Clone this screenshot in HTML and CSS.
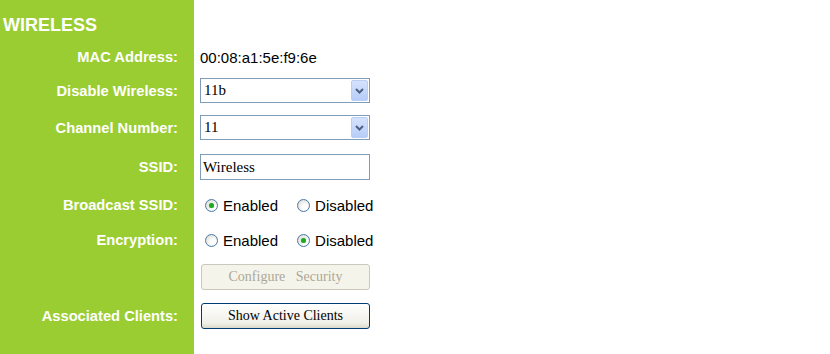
FILE: index.html
```html
<!DOCTYPE html>
<html>
<head>
<meta charset="utf-8">
<link rel="stylesheet" href="styles.css">
</head>
<body>
<div class="page">
  <div class="side title">WIRELESS</div><div class="main"></div>

  <div class="side label">MAC Address:</div>
  <div class="main"><span class="value">00:08:a1:5e:f9:6e</span></div>

  <div class="side label">Disable Wireless:</div>
  <div class="main">
    <div class="select"><span class="sel-text">11b</span>
      <span class="sel-btn"><svg width="9" height="6" viewBox="0 0 9 6"><path d="M1 1 L4.5 4.5 L8 1" fill="none" stroke="#4d6185" stroke-width="2"/></svg></span>
    </div>
  </div>

  <div class="side label">Channel Number:</div>
  <div class="main">
    <div class="select"><span class="sel-text">11</span>
      <span class="sel-btn"><svg width="9" height="6" viewBox="0 0 9 6"><path d="M1 1 L4.5 4.5 L8 1" fill="none" stroke="#4d6185" stroke-width="2"/></svg></span>
    </div>
  </div>

  <div class="side label">SSID:</div>
  <div class="main"><div class="textbox">Wireless</div></div>

  <div class="side label">Broadcast SSID:</div>
  <div class="main radios">
    <span class="opt"><span class="radio on"></span>Enabled</span>
    <span class="opt"><span class="radio"></span>Disabled</span>
  </div>

  <div class="side label">Encryption:</div>
  <div class="main radios">
    <span class="opt"><span class="radio"></span>Enabled</span>
    <span class="opt"><span class="radio on"></span>Disabled</span>
  </div>

  <div class="side label"></div>
  <div class="main"><div class="btn disabled">Configure&nbsp;&nbsp; Security</div></div>

  <div class="side label">Associated Clients:</div>
  <div class="main"><div class="btn active">Show Active Clients</div></div>

  <div class="side filler"></div><div class="main"></div>
</div>
</body>
</html>
```
FILE: styles.css
```css
html, body {
  margin: 0;
  padding: 0;
  background: #ffffff;
}
.page {
  display: grid;
  grid-template-columns: 194px 1fr;
  grid-template-rows: 40px 34px 33px 41px 38px 38px 32px 41px 38px 1fr;
  height: 354px;
  width: 830px;
  font-family: "Liberation Sans", Arial, sans-serif;
}
.side {
  background: #9acd32;
  color: #ffffff;
}
.title {
  font-size: 18px;
  font-weight: bold;
  line-height: 18px;
  padding: 16px 0 0 3px;
  box-sizing: border-box;
}
.label {
  font-size: 14.7px;
  font-weight: bold;
  text-align: right;
  padding-right: 16px;
  display: flex;
  align-items: center;
  justify-content: flex-end;
}
.main {
  display: flex;
  align-items: center;
  padding-left: 6px;
}
.value {
  font-size: 15px;
  color: #000;
}
.select {
  width: 170px;
  height: 25px;
  box-sizing: border-box;
  border: 1px solid #7f9db9;
  display: flex;
  align-items: center;
  justify-content: space-between;
  background: #fff;
}
.sel-text, .textbox {
  font-family: "Liberation Serif", "Times New Roman", serif;
  font-size: 15px;
  color: #000;
  padding-left: 3px;
}
.sel-btn {
  width: 17px;
  height: 21px;
  margin-right: 1px;
  box-sizing: border-box;
  border: 1px solid #b9cdf5;
  border-radius: 2px;
  background: linear-gradient(#d5e2fc, #b7cdf8);
  display: flex;
  align-items: center;
  justify-content: center;
}
.textbox {
  width: 170px;
  height: 26px;
  box-sizing: border-box;
  border: 1px solid #7f9db9;
  padding-left: 2px;
  display: flex;
  align-items: center;
}
.radios {
  gap: 19px;
  padding-left: 11px;
  font-size: 15px;
  color: #000;
}
.opt {
  display: flex;
  align-items: center;
  gap: 5px;
}
.radio {
  width: 13px;
  height: 13px;
  box-sizing: border-box;
  border-radius: 50%;
  border: 1px solid #4a78a8;
  background: radial-gradient(circle at 65% 65%, #ffffff 25%, #d4d2c8 100%);
  display: inline-block;
  position: relative;
}
.radio.on::after {
  content: "";
  position: absolute;
  left: 3px;
  top: 3px;
  width: 5px;
  height: 5px;
  border-radius: 50%;
  background: #26a626;
  box-shadow: 0 0 1px #5fd35f;
}
.btn {
  width: 169px;
  height: 26px;
  margin-left: 1px;
  box-sizing: border-box;
  border-radius: 3px;
  display: flex;
  align-items: center;
  justify-content: center;
  font-family: "Liberation Serif", "Times New Roman", serif;
  font-size: 14px;
}
.btn.disabled {
  border: 1px solid #cac8bb;
  background: #f5f4ea;
  color: #aca899;
}
.btn.active {
  border: 1px solid #003c74;
  background: linear-gradient(#ffffff, #f0efe8 80%, #dcd9cb);
  color: #000;
}
```
